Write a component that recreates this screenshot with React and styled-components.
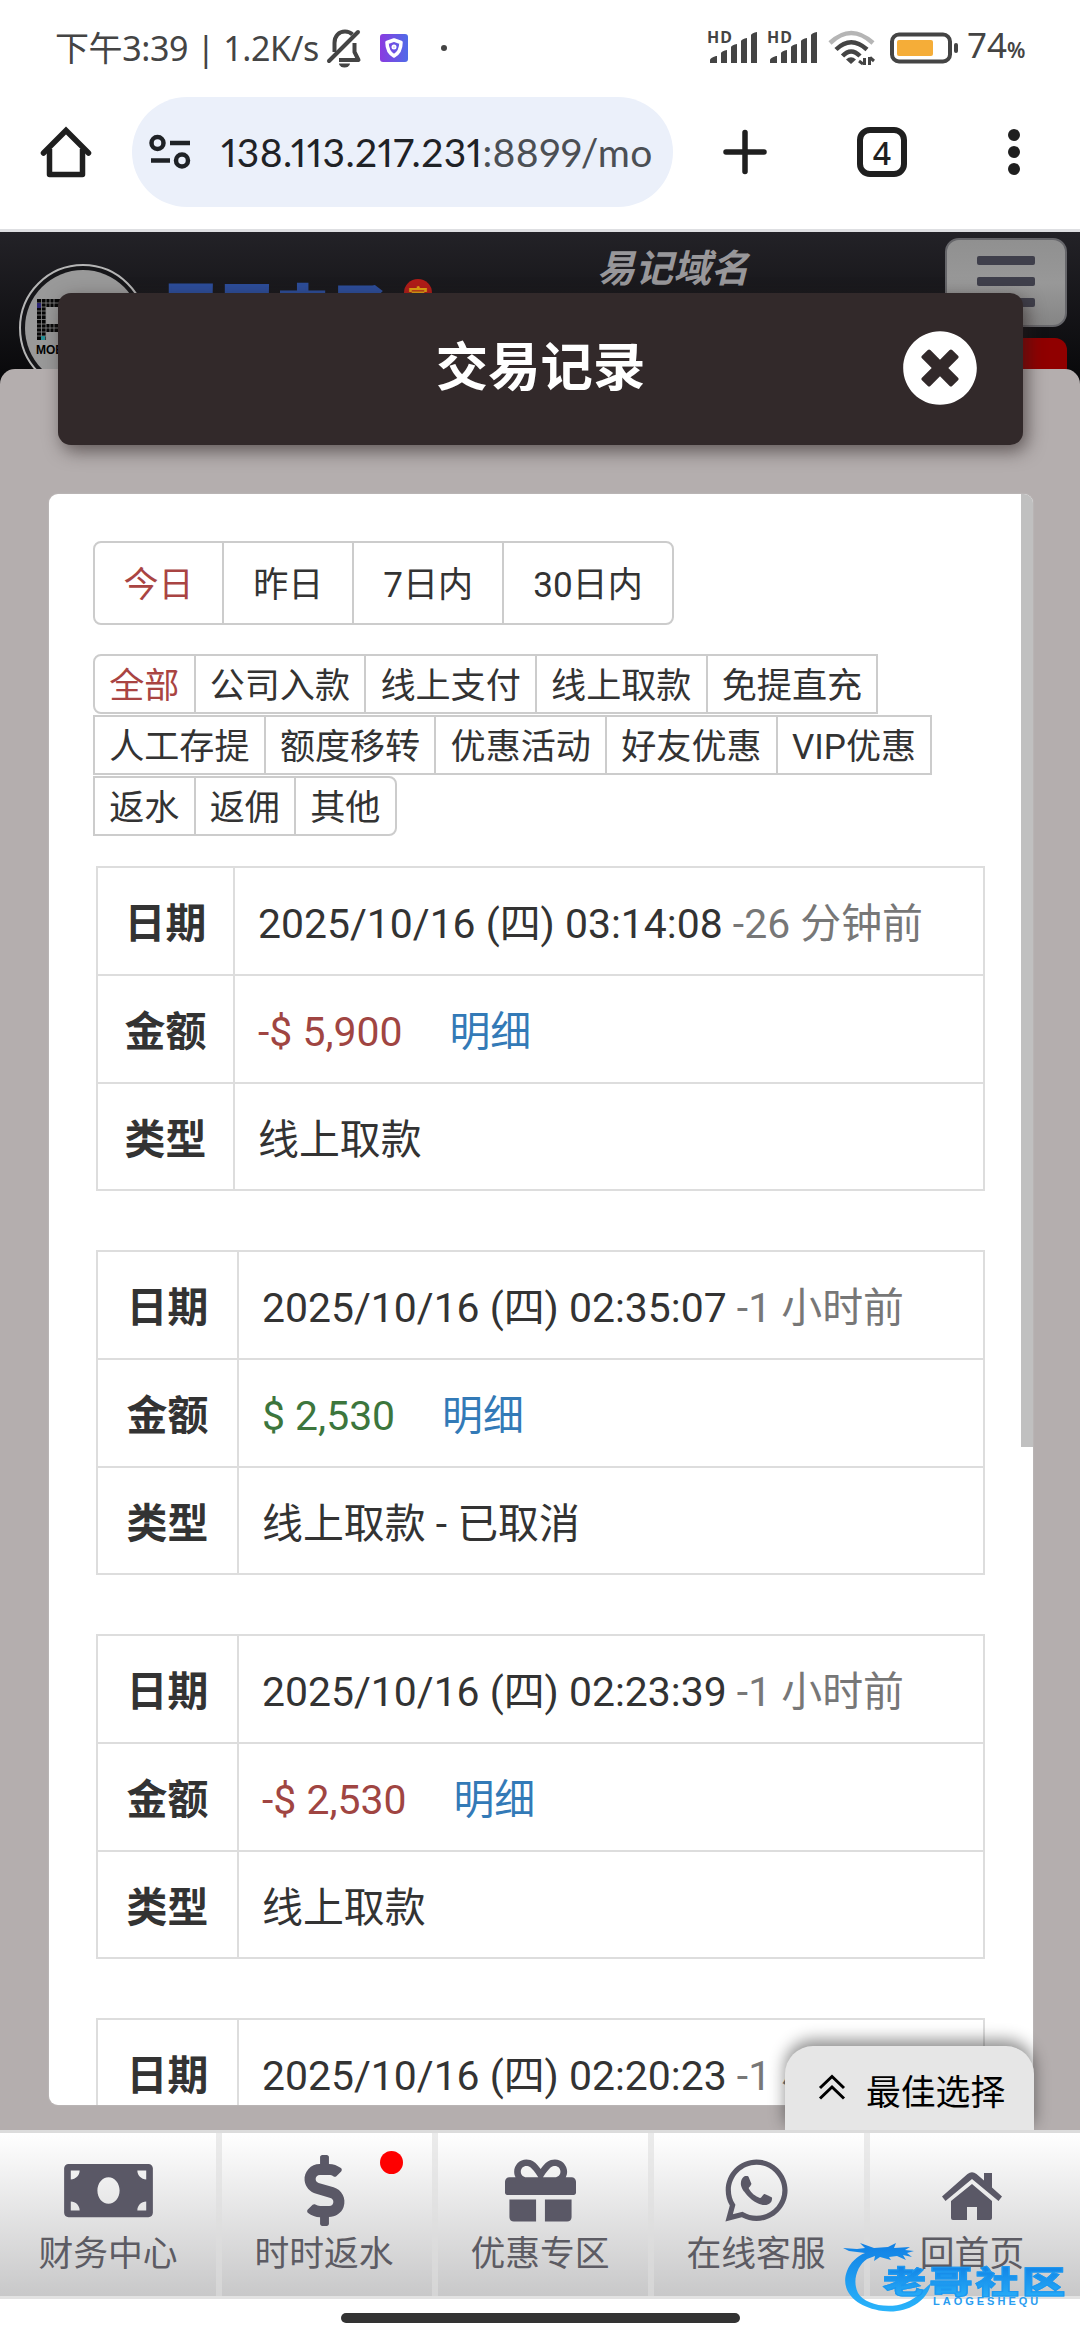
import styled, { createGlobalStyle } from "styled-components";
import { FaDollarSign, FaGift, FaMoneyBill, FaTimesCircle, FaWhatsapp } from "react-icons/fa";

const GlobalStyle = createGlobalStyle`
    * { box-sizing: border-box; }
    body {
        margin: 0;
        background: #fff;
        color: #333;
        font-family: Roboto, "Noto Sans CJK SC", sans-serif;
    }
    svg { display: block; flex: none; overflow: visible; }
`;

const Screen = styled.div`
    position: relative;
    display: flex;
    flex-direction: column;
    width: 1080px;
    height: 2340px;
    overflow: hidden;
`;

/* phone status bar */
const StatusBar = styled.div`
    display: flex;
    align-items: center;
    height: 95px;
    padding-left: 55px;
    color: #444;
`;

const Clock = styled.div`
    width: 272px;
    font-family: "Noto Sans", "Noto Sans CJK SC", sans-serif;
    font-size: 34px;
    line-height: 40px;
    white-space: nowrap;
    letter-spacing: -0.4px;
`;

const AppBadge = styled.div`
    display: flex;
    align-items: center;
    justify-content: center;
    width: 28px;
    height: 28px;
    margin-left: 17px;
    border-radius: 3px;
    background: linear-gradient(90deg, #8a3be0, #4f6be8);
`;

const Dot = styled.div`
    width: ${props => props.$size};
    height: ${props => props.$size};
    border-radius: 50%;
    background: ${props => props.$color};
`;

const StatusDot = styled(Dot)`
    margin-left: 33px;
`;

const StatusIcons = styled.div`
    display: flex;
    align-items: center;
    margin-left: 261px;
`;

const Battery = styled.div`
    display: flex;
    align-items: baseline;
    margin-left: 9px;
    font-family: "Noto Sans", sans-serif;
    font-size: 35px;
    line-height: 40px;
`;

const Percent = styled.span`
    font-size: 21px;
    font-weight: 600;
`;

/* browser toolbar */
const Toolbar = styled.div`
    display: flex;
    align-items: center;
    height: 134px;
    padding: 0 0 20px 40px;
`;

const AddressBar = styled.div`
    display: flex;
    align-items: center;
    width: 541px;
    height: 110px;
    margin-left: 40px;
    padding-left: 17px;
    border-radius: 55px;
    background: #ebf0fa;
`;

const Url = styled.div`
    margin-left: 29px;
    font-family: Lato, sans-serif;
    font-size: 39px;
    font-feature-settings: "pnum";
    letter-spacing: 0.4px;
    color: #1f2226;
    white-space: nowrap;
    span { color: #4b4f54; }
`;

const TabCount = styled.div`
    display: flex;
    align-items: center;
    justify-content: center;
    width: 50px;
    height: 50px;
    margin-left: 90px;
    border: 6px solid #1f1f1f;
    border-radius: 13px;
    font-family: "Noto Sans", sans-serif;
    font-size: 32px;
    font-weight: 500;
    color: #1f1f1f;
`;

const MoreMenu = styled.div`
    display: flex;
    flex-direction: column;
    gap: 5px;
    margin-left: 101px;
`;

/* web page under the dialog */
const Page = styled.div`
    position: relative;
    flex: 1;
    display: flex;
    flex-direction: column;
    border-top: 3px solid #dedfe2;
    background: linear-gradient(#232227, #08080a 150px);
`;

const SiteHeader = styled.div`
    display: flex;
    height: 152px;
    overflow: hidden;
`;

const Brand = styled.div`
    width: 230px;
    margin: 46px 0 0 17px;
    font-family: "Noto Sans CJK SC", sans-serif;
    font-weight: 900;
    font-size: 54px;
    line-height: 60px;
    letter-spacing: 2px;
    white-space: nowrap;
    color: #2c4d9a;
    -webkit-text-stroke: 3px #2c4d9a;
`;

const BrandSeal = styled.div`
    width: 28px;
    height: 28px;
    margin: 47px 0 0 10px;
    border-radius: 50%;
    background: #b01c18;
    color: #e2a010;
    font-size: 20px;
    font-weight: 700;
    line-height: 36px;
    text-align: center;
`;

const DomainNote = styled.div`
    width: 200px;
    margin: 10px 0 0 165px;
    font-size: 38px;
    font-weight: 700;
    font-style: italic;
    line-height: 54px;
    color: #98979a;
    white-space: nowrap;
`;

const HeaderSide = styled.div`
    display: flex;
    flex-direction: column;
    gap: 11px;
    margin: 6px 0 0 148px;
`;

const MenuButton = styled.div`
    display: flex;
    flex-direction: column;
    align-items: center;
    gap: 12px;
    width: 122px;
    height: 89px;
    padding-top: 16px;
    border: 2px solid #66666a;
    border-radius: 14px;
    background: linear-gradient(#909090, #989898 50%, #858585);
`;

const MenuLine = styled.div`
    width: 58px;
    height: 9px;
    border-radius: 2px;
    background: #3f3f4b;
`;

const RedTab = styled.div`
    width: 122px;
    height: 40px;
    border-radius: 12px 12px 0 0;
    background: #900000;
`;

const SiteBody = styled.div`
    flex: 1;
    margin-top: -15px;
    border-radius: 15px 15px 0 0;
    background: #b4aeae;
    z-index: 1;
`;

/* dialog */
const Dialog = styled.div`
    position: absolute;
    inset: 0;
    z-index: 2;
    padding: 61px 47px 0 49px;
`;

const DialogHeader = styled.div`
    display: grid;
    grid-template-columns: 1fr auto 1fr;
    align-items: center;
    height: 152px;
    margin: 0 10px 0 9px;
    padding: 0 45px 3px;
    border-radius: 13px;
    background: #32292a;
    box-shadow: 4px 6px 18px rgba(40, 30, 30, 0.6);
    color: #fff;
    svg { justify-self: end; }
`;

const DialogTitle = styled.div`
    grid-column: 2;
    font-size: 52.4px;
    font-weight: 700;
    line-height: 60px;
`;

const Card = styled.div`
    display: flex;
    justify-content: space-between;
    height: 1611px;
    margin-top: 49px;
    border-radius: 9px;
    overflow: hidden;
    background: #fff;
    box-shadow: 0 0 2px #c8c4c4;
`;

const Content = styled.div`
    padding: 47px 0 0 44px;
`;

const ScrollThumb = styled.div`
    width: 12px;
    height: 953px;
    background: #c0c0c0;
`;

const ButtonGroup = styled.div`
    display: flex;
    height: ${props => props.$height};
    margin-top: ${props => props.$top || 0};
`;

const FilterButton = styled.div`
    display: flex;
    align-items: center;
    padding: ${props => props.$pad};
    margin-left: -2px;
    border: 2px solid #ccc;
    font-size: 35.1px;
    line-height: 1;
    white-space: nowrap;
    color: ${props => (props.$active ? "#a94442" : "#333")};
    border-radius: ${props => props.$radius || 0};
    &:first-child { margin-left: 0; }
`;

const Record = styled.div`
    width: 889px;
    margin: ${props => props.$top} 0 0 3px;
    border: 2px solid #ddd;
`;

const Row = styled.div`
    display: flex;
    height: 108px;
    border-bottom: 2px solid #ddd;
    font-size: 40.9px;
    line-height: 108px;
    white-space: nowrap;
    &:last-child { border: 0; height: 105px; }
`;

const Label = styled.div`
    width: ${props => props.$width};
    padding-top: 2px;
    border-right: 2px solid #ddd;
    font-weight: 700;
    text-align: center;
`;

const Value = styled.div`
    padding: 2px 0 0 23px;
`;

const Ago = styled.span`
    color: #777;
`;

const Amount = styled.span`
    color: ${props => (props.$negative ? "#a04542" : "#3c763d")};
`;

const Detail = styled.span`
    margin-left: 47px;
    color: #337ab7;
`;

const BestChoice = styled.div`
    position: absolute;
    right: 46px;
    bottom: 0;
    z-index: 3;
    display: flex;
    align-items: center;
    gap: 20px;
    width: 249px;
    height: 84px;
    padding: 3px 0 0 33px;
    border-radius: 28px 28px 0 0;
    background: #e6e6e6;
    box-shadow: 0 -6px 16px rgba(0, 0, 0, 0.45);
    color: #000;
    font-size: 34.8px;
    white-space: nowrap;
`;

/* bottom navigation */
const BottomNav = styled.div`
    position: relative;
    z-index: 4;
    display: grid;
    grid-template-columns: repeat(5, 216px);
    height: 169px;
    border-top: 3px solid #dcdcdc;
    border-bottom: 3px solid #e2e2e2;
    background: linear-gradient(#fff, #c8c8c9);
`;

const NavItem = styled.div`
    position: relative;
    display: flex;
    flex-direction: column;
    align-items: center;
    padding-top: 22px;
    font-size: 34.8px;
    line-height: 46px;
    box-shadow: inset 6px 0 0 rgba(222, 222, 222, 0.6);
    color: #5a5866;
    &:first-child { box-shadow: none; }
`;

const NavLabel = styled.div`
    margin-top: 5px;
    color: #5c5b63;
`;

const NavBadge = styled(Dot)`
    position: absolute;
    top: 18px;
    left: 164px;
`;

const HomeIndicator = styled.div`
    width: 399px;
    height: 10px;
    margin: 14px auto 17px;
    border-radius: 5px;
    background: #333;
`;

/* community mark that floats over the corner */
const Watermark = styled.div`
    position: absolute;
    right: 8px;
    bottom: 27px;
    z-index: 5;
    width: 229px;
    height: 72px;
    svg { position: absolute; left: 0; top: 0; }
`;

const WatermarkName = styled.div`
    position: absolute;
    left: 40px;
    top: 19px;
    font-size: 43px;
    font-weight: 900;
    line-height: 44px;
    letter-spacing: 3.4px;
    white-space: nowrap;
    transform: scaleY(0.72);
    color: transparent;
    background: linear-gradient(#1284e6, #27adf8);
    background-clip: text;
    -webkit-text-stroke: 1.5px #1c98f0;
`;

const WatermarkLatin = styled.div`
    position: absolute;
    left: 90px;
    top: 54px;
    font-family: "Liberation Sans", sans-serif;
    font-size: 11px;
    font-weight: 700;
    line-height: 13px;
    letter-spacing: 3px;
    color: #2a9df0;
`;

function MutedBell() {
    return (
        <svg width="36" height="40" viewBox="0 0 36 40" fill="none" stroke="#444" strokeWidth="4">
            <path d="M7.5 24V15C7.5 8 12 3.5 18 3.5c3 0 5.500 1 7.500 3" />
            <path d="M27.500 15v9l4 8H12" strokeLinejoin="round" />
            <path d="M2 33L31 4" strokeLinecap="round" />
            <path d="M12 35.500h11a5.500 4 0 0 1-11 0z" fill="#444" stroke="none" />
        </svg>
    );
}

function Signal() {
    return (
        <svg width="60" height="36" viewBox="0 0 60 36" fill="#444">
            <text x="-1" y="13" fontSize="16" fontWeight="700" fontFamily="Noto Sans" textLength="25">HD</text>
            <path d="M2 34v-3q0-2 6-4h1v7zM13 34V24q1-2 6-3v13zM23 34V18q1-2 6-3v19zM33 34V12q1-2 6-3v25zM43 34V6q1-2 6-3v31z" transform="translate(0 -1)" />
        </svg>
    );
}

function Wifi() {
    return (
        <svg width="48" height="38" viewBox="0 0 48 38" fill="none" stroke="#444" strokeWidth="4.500">
            <path d="M2 14Q23-6 45 14" stroke="#b5b5b5" />
            <path d="M8 20.500Q23 6 39 20.500M14.500 27Q23 18 32 27" />
            <path d="M23 35l-5-4.500q5-4.500 10 0z" fill="#444" stroke="none" />
            <path d="M36.500 29v7M35 35l-4-3M41.500 36v-8M42 28.500l4 3.500" strokeWidth="3" />
        </svg>
    );
}

function BatteryIcon() {
    return (
        <svg width="68" height="32" viewBox="0 0 68 32" style={{ marginLeft: 14 }}>
            <rect x="2" y="2.500" width="58" height="27" rx="7" fill="none" stroke="#444" strokeWidth="4" />
            <rect x="7" y="8" width="36" height="16" rx="2" fill="#f5ad38" />
            <rect x="64" y="11" width="4" height="10" rx="2" fill="#444" />
        </svg>
    );
}

function HomeOutline() {
    return (
        <svg width="52" height="52" viewBox="0 0 52 52" fill="none" stroke="#1f1f1f" strokeWidth="5.500" strokeLinejoin="round">
            <path d="M9.500 23v25.500h33V23" />
            <path d="M3.500 27L26 4.500 48.500 27" strokeLinecap="round" strokeLinejoin="miter" />
        </svg>
    );
}

function SiteSettings() {
    return (
        <svg width="43" height="36" viewBox="0 0 43 36" fill="none" stroke="#1f2226" strokeWidth="4.500">
            <circle cx="8.500" cy="9" r="6" />
            <circle cx="33" cy="26.500" r="6" />
            <path d="M21 9h20M2 26.500h19" />
        </svg>
    );
}

function SiteLogo() {
    return (
        <svg width="128" height="152" viewBox="0 0 128 152" style={{ marginLeft: 19 }}>
            <circle cx="64" cy="96" r="63" fill="#161619" stroke="#b5b5b5" strokeWidth="2" />
            <circle cx="64" cy="96" r="58" fill="#999" />
            <path d="M18 67h40v33H27v-8h22V75H27v33h-9z" fill="#060606" />
            <path d="M18 71h40M18 75h9M18 79h9M18 83h9M18 87.500h9M18 92h9M18 96h40M18 100h9M18 104h9M22.500 67v41M27 67v41M31 67v8M35 67v8M31 92v8M35 92v8" stroke="#8d8d8d" strokeWidth=".8" />
            <path d="M18 71h4v5h-4z" fill="#2a2470" />
            <path d="M22 104h4v4h-4z" fill="#278f95" />
            <text x="17" y="122" fontSize="12" fontWeight="700" fontFamily="Liberation Sans">MOBI</text>
        </svg>
    );
}

function HomeSolid() {
    return (
        <svg width="62" height="71" viewBox="0 0 62 71" fill="#5a5866">
            <path d="M1 41.500L26.500 19q4.500-3.500 9 0l7.500 6.500V18h8v14.500L61 41.500l-3.500 4.500L31 24 4.500 46z" />
            <path d="M10 46L31 29l20 17v17q0 2-2 2H36V52H26v13H12q-2 0-2-2z" />
        </svg>
    );
}

const FILTERS = [
    ["全部", "公司入款", "线上支付", "线上取款", "免提直充"],
    ["人工存提", "额度移转", "优惠活动", "好友优惠", "VIP优惠"],
    ["返水", "返佣", "其他"],
];

const RECORDS = [
    { date: "2025/10/16 (四) 03:14:08", ago: "-26 分钟前", amount: "-$ 5,900", type: "线上取款", label: "137px" },
    { date: "2025/10/16 (四) 02:35:07", ago: "-1 小时前", amount: "$ 2,530", type: "线上取款 - 已取消", label: "141px" },
    { date: "2025/10/16 (四) 02:23:39", ago: "-1 小时前", amount: "-$ 2,530", type: "线上取款", label: "141px" },
    { date: "2025/10/16 (四) 02:20:23", ago: "-1 小时前", amount: "-$ 2,530", type: "线上取款", label: "141px" },
];

const NAV = [
    { label: "财务中心", icon: <FaMoneyBill size={71} style={{ width: 89 }} /> },
    { label: "时时返水", icon: <FaDollarSign size={71} />, badge: true },
    { label: "优惠专区", icon: <FaGift size={71} /> },
    { label: "在线客服", icon: <FaWhatsapp size={71} /> },
    { label: "回首页", icon: <HomeSolid /> },
];

function filterRadius(row, i) {
    if (row === 0 && i === 0) return "8px 0 0 8px";
    if (row === 2 && i === 2) return "0 8px 8px 0";
    return "0";
}

export default function App() {
    return (
        <Screen>
            <GlobalStyle />
            <StatusBar>
                <Clock>下午3:39 | 1.2K/s</Clock>
                <MutedBell />
                <AppBadge>
                    <svg width="18" height="20" viewBox="0 0 18 20" fill="none" stroke="#fff" strokeWidth="3.500">
                        <path d="M9 2L16 4.500Q16 14 9 18 2 14 2 4.500z" strokeLinejoin="round" />
                        <circle cx="9" cy="9" r="1.500" strokeWidth="2" />
                    </svg>
                </AppBadge>
                <StatusDot $size="6px" $color="#444" />
                <StatusIcons>
                    <Signal />
                    <Signal />
                    <Wifi />
                    <BatteryIcon />
                    <Battery>74<Percent>%</Percent></Battery>
                </StatusIcons>
            </StatusBar>
            <Toolbar>
                <HomeOutline />
                <AddressBar>
                    <SiteSettings />
                    <Url>138.113.217.231<span>:8899/mo</span></Url>
                </AddressBar>
                <svg width="44" height="46" viewBox="0 0 44 46" stroke="#1f1f1f" strokeWidth="5.500" strokeLinecap="round" style={{ marginLeft: 50 }}>
                    <path d="M22 3.500v39M3 23h38" />
                </svg>
                <TabCount>4</TabCount>
                <MoreMenu>
                    <Dot $size="12px" $color="#1f1f1f" />
                    <Dot $size="12px" $color="#1f1f1f" />
                    <Dot $size="12px" $color="#1f1f1f" />
                </MoreMenu>
            </Toolbar>
            <Page>
                <SiteHeader>
                    <SiteLogo />
                    <Brand>凤凰电子</Brand>
                    <BrandSeal>官</BrandSeal>
                    <DomainNote>易记域名</DomainNote>
                    <HeaderSide>
                        <MenuButton>
                            <MenuLine />
                            <MenuLine />
                            <MenuLine />
                        </MenuButton>
                        <RedTab />
                    </HeaderSide>
                </SiteHeader>
                <SiteBody />
                <Dialog>
                    <DialogHeader>
                        <DialogTitle>交易记录</DialogTitle>
                        <FaTimesCircle size={76} />
                    </DialogHeader>
                    <Card>
                        <Content>
                            <ButtonGroup $height="84px">
                                <FilterButton $pad="5px 28.5px 0" $radius="8px 0 0 8px" $active>今日</FilterButton>
                                <FilterButton $pad="5px 29px 0">昨日</FilterButton>
                                <FilterButton $pad="5px 29px 0">7日内</FilterButton>
                                <FilterButton $pad="5px 29px 0" $radius="0 8px 8px 0">30日内</FilterButton>
                            </ButtonGroup>
                            {FILTERS.map((names, row) => (
                                <ButtonGroup key={row} $height="60px" $top={row === 0 ? "29px" : "1px"}>
                                    {names.map((name, i) => (
                                        <FilterButton key={name} $pad="6px 14.2px 0" $radius={filterRadius(row, i)} $active={name === "全部"}>
                                            {name}
                                        </FilterButton>
                                    ))}
                                </ButtonGroup>
                            ))}
                            {RECORDS.map((r, i) => (
                                <Record key={r.date} $top={i === 0 ? "30px" : "59px"}>
                                    <Row>
                                        <Label $width={r.label}>日期</Label>
                                        <Value>{r.date} <Ago>{r.ago}</Ago></Value>
                                    </Row>
                                    <Row>
                                        <Label $width={r.label}>金额</Label>
                                        <Value>
                                            <Amount $negative={r.amount.startsWith("-")}>{r.amount}</Amount>
                                            <Detail>明细</Detail>
                                        </Value>
                                    </Row>
                                    <Row>
                                        <Label $width={r.label}>类型</Label>
                                        <Value>{r.type}</Value>
                                    </Row>
                                </Record>
                            ))}
                        </Content>
                        <ScrollThumb />
                    </Card>
                </Dialog>
                <BestChoice>
                    <svg width="28" height="26" viewBox="0 0 28 26" fill="none" stroke="#000" strokeWidth="3">
                        <path d="M2 11L14-.500 26 11M2 21.500L14 10l12 11.500" />
                    </svg>
                    最佳选择
                </BestChoice>
            </Page>
            <BottomNav>
                {NAV.map(item => (
                    <NavItem key={item.label}>
                        {item.icon}
                        <NavLabel>{item.label}</NavLabel>
                        {item.badge && <NavBadge $size="23px" $color="#fe0000" />}
                    </NavItem>
                ))}
            </BottomNav>
            <HomeIndicator />
            <Watermark>
                <svg width="100" height="72" viewBox="0 0 100 72">
                    <defs>
                        <linearGradient id="swoosh" x1="0" y1="0" x2="0" y2="1">
                            <stop offset="0" stopColor="#1180e4" />
                            <stop offset="1" stopColor="#2ab4fb" />
                        </linearGradient>
                    </defs>
                    <path fill="url(#swoosh)" d="M0 7l14 1 8-1-5-5 14 5 14-1 8-4-2 5 16-1-5 3 9 1-7 2 5 4-9-2 3 5-9-4-8 1 2 3-11-3-6 4 1-5-8 3C14 25 9 40 15 52c8 14 44 20 62 0l11-10C84 62 62 73 40 70 10 66-3 48 4 30 7 22 14 15 22 12L6 10z" />
                </svg>
                <WatermarkName>老哥社区</WatermarkName>
                <WatermarkLatin>LAOGESHEQU</WatermarkLatin>
            </Watermark>
        </Screen>
    );
}
